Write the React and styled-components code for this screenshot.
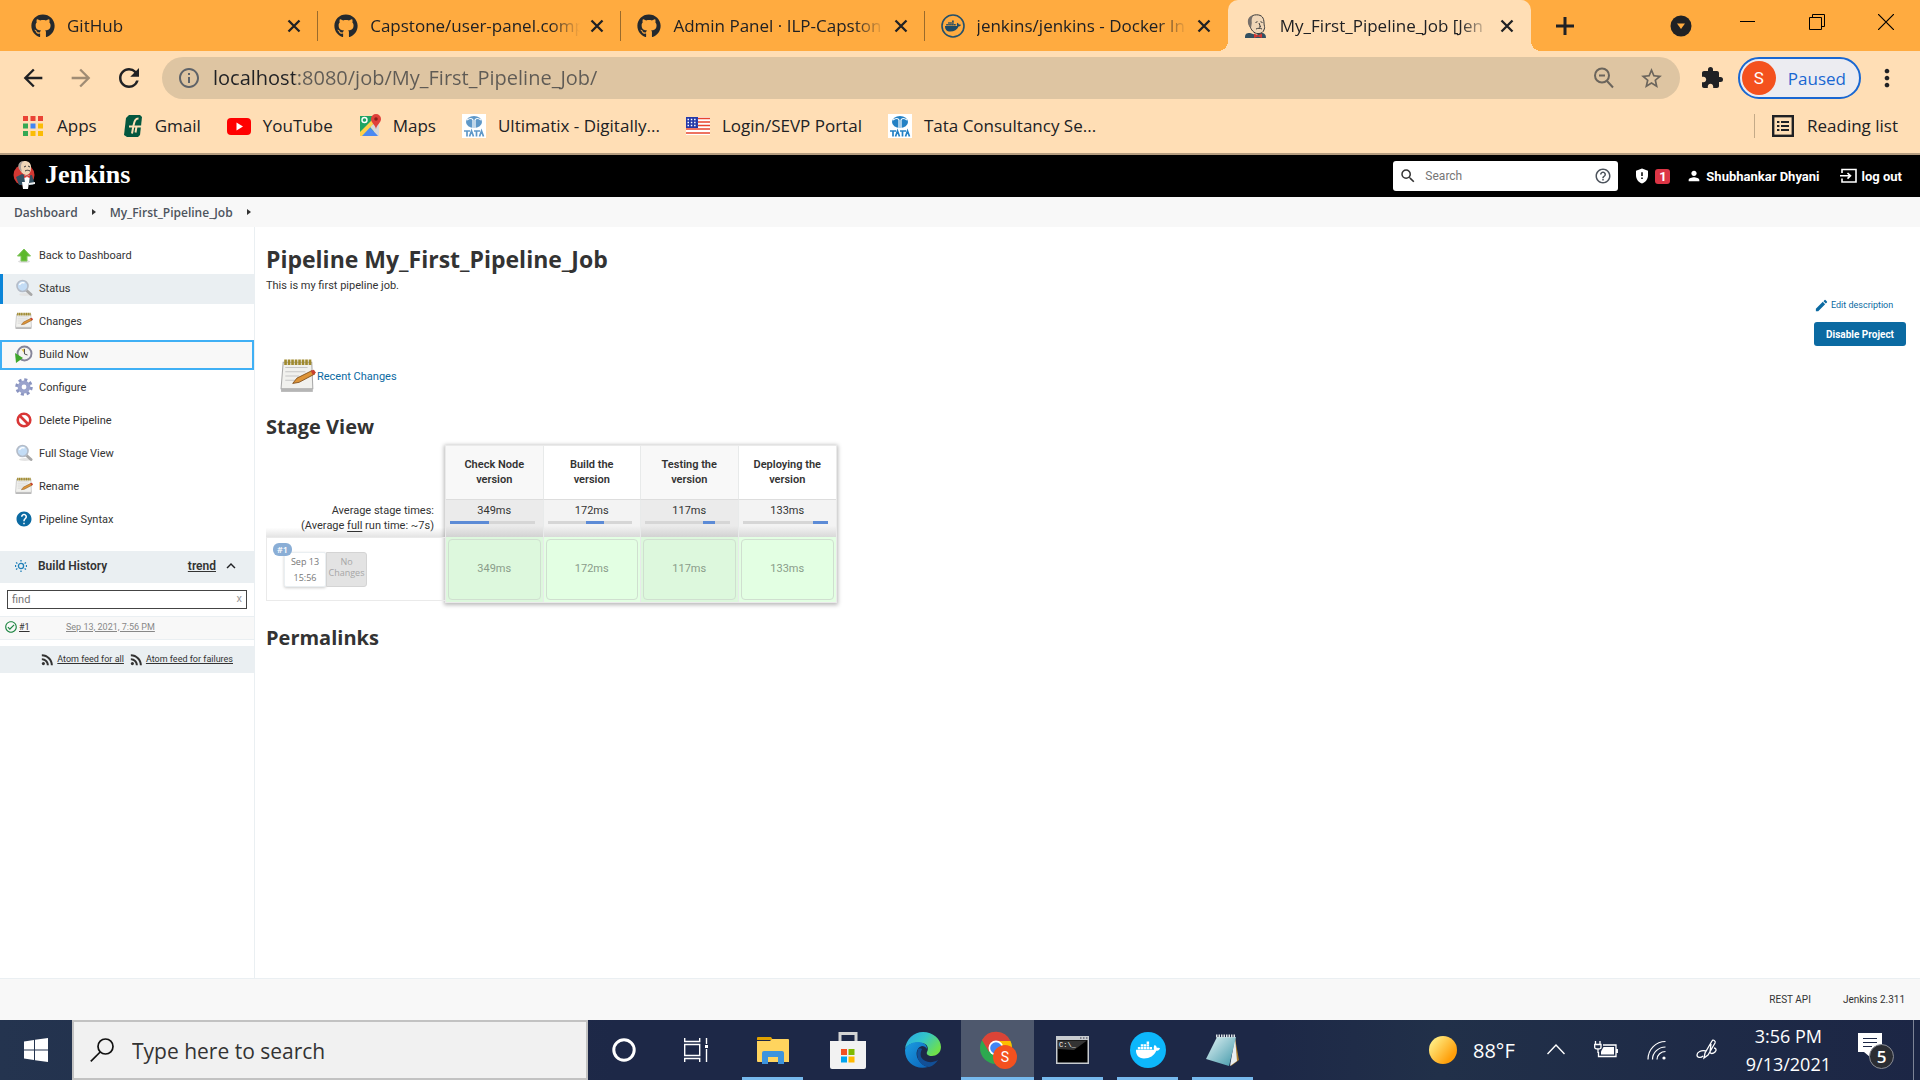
import React from "react";
import styled, { createGlobalStyle, css } from "styled-components";
import { FaGithub, FaDocker } from "react-icons/fa";
import {
  MdArrowBack,
  MdArrowForward,
  MdRefresh,
  MdInfoOutline,
  MdStarBorder,
  MdExtension,
  MdMoreVert,
  MdSearch,
  MdHelpOutline,
  MdGppMaybe,
  MdPerson,
  MdEdit,
  MdRssFeed,
  MdExpandLess,
  MdHelp,
  MdOutlineCheckCircle,
} from "react-icons/md";

const uiFont = `"Open Sans", "Noto Sans", sans-serif`;

const GlobalStyle = createGlobalStyle`
  * { box-sizing: border-box; }
  body {
    margin: 0;
    background: #fff;
    color: #333;
    font-family: Roboto, "Open Sans", sans-serif;
    font-size: 11px;
    line-height: 15px;
  }
  button, input { font: inherit; color: inherit; }
  button { margin: 0; padding: 0; border: 0; background: none; cursor: pointer; }
  a { color: inherit; text-decoration: none; }
  svg { display: block; flex: none; }
`;

const Screen = styled.div`
  display: flex;
  flex-direction: column;
  min-height: 100vh;
`;

/* ---------- Browser chrome ---------- */

const TabStrip = styled.div`
  display: flex;
  height: 51px;
  padding-left: 15px;
  background: #ffab40;
  color: #202124;
  font-family: ${uiFont};
  font-size: 17px;
  line-height: 24px;
`;

const Tabs = styled.div`
  display: flex;
  flex: 0 1 1516px;
  min-width: 0;
`;

const Tab = styled.div`
  position: relative;
  display: flex;
  flex: 1 1 0;
  min-width: 0;
  align-items: center;
  padding: 0 14px 0 16px;
  ${(p) =>
    p.$active
      ? css`
          background: #ffdeb5;
          border-radius: 10px 10px 0 0;
          &::before,
          &::after {
            content: "";
            position: absolute;
            bottom: 0;
            width: 10px;
            height: 10px;
          }
          &::before {
            right: 100%;
            background: radial-gradient(circle at 0 0, #ffab40 10px, #ffdeb5 10px);
          }
          &::after {
            left: 100%;
            background: radial-gradient(circle at 100% 0, #ffab40 10px, #ffdeb5 10px);
          }
        `
      : css`
          &:not(:nth-last-child(2))::after {
            content: "";
            position: absolute;
            right: 0;
            top: 11px;
            width: 1px;
            height: 30px;
            background: #9a6a2b;
          }
        `}
`;

const TabTitle = styled.button`
  flex: 1;
  min-width: 0;
  margin: 0 3px 0 12px;
  overflow: hidden;
  white-space: nowrap;
  text-align: left;
  mask-image: linear-gradient(to right, #000 calc(100% - 34px), transparent calc(100% - 4px));
`;

const IconButton = styled.button`
  display: flex;
  flex: none;
  align-items: center;
  justify-content: center;
  width: ${(p) => p.$w || 24}px;
  height: 24px;
  color: ${(p) => p.$color || "#202124"};
`;

const NewTab = styled(IconButton)`
  width: 36px;
  height: 51px;
  margin-left: 16px;
`;

const WindowControls = styled.div`
  display: flex;
  margin-left: auto;
`;

const WindowButton = styled.button`
  display: flex;
  align-items: center;
  justify-content: center;
  width: 69px;
  height: 43px;
  color: #000;
`;

const TabSearch = styled(WindowButton)`
  width: 64px;
  height: 51px;
`;

const Toolbar = styled.div`
  display: flex;
  align-items: center;
  height: 54px;
  padding: 0 21px;
  background: #ffdeb5;
  color: #202124;
  font-family: ${uiFont};
`;

const NavButtons = styled.div`
  display: flex;
  gap: 24px;
  margin-right: 21px;
`;

const Omnibox = styled.div`
  display: flex;
  flex: 1;
  align-items: center;
  gap: 12px;
  height: 42px;
  margin-right: 20px;
  padding: 0 16px 0 15px;
  border-radius: 21px;
  background: #dec5a2;
  color: #5f5b55;
`;

const UrlInput = styled.input`
  flex: 1;
  min-width: 0;
  padding: 0;
  border: 0;
  outline: 0;
  background: linear-gradient(to right, #202124 82px, #5f5b55 82px);
  background-clip: text;
  -webkit-text-fill-color: transparent;
  font-size: 20px;
  line-height: 28px;
`;

const OmniActions = styled.div`
  display: flex;
  gap: 24px;
`;

const Profile = styled.button`
  display: flex;
  align-items: center;
  gap: 12px;
  height: 42px;
  margin: 0 14px;
  padding: 0 13px 0 2px;
  border: 2px solid #1967d2;
  border-radius: 21px;
  background: #ececf1;
  color: #1967d2;
  font-size: 17px;
`;

const Avatar = styled.span`
  display: flex;
  align-items: center;
  justify-content: center;
  width: 34px;
  height: 34px;
  border-radius: 50%;
  background: #f4511e;
  color: #fff;
  font: 17px Roboto, sans-serif;
`;

const Bookmarks = styled.nav`
  display: flex;
  align-items: center;
  height: 50px;
  padding: 0 22px 6px 21px;
  border-bottom: 2px solid #b59d80;
  background: #ffdeb5;
  color: #202124;
  font-family: ${uiFont};
  font-size: 17px;
  line-height: 24px;
  white-space: nowrap;
`;

const Bookmark = styled.a`
  display: flex;
  align-items: center;
  gap: 12px;
  margin-right: 26px;
`;

const ReadingList = styled.button`
  display: flex;
  align-items: center;
  gap: 12px;
  margin-left: auto;
  padding-left: 16px;
  border-left: 1px solid #c4aa88;
`;

/* ---------- Jenkins header ---------- */

const Header = styled.header`
  display: flex;
  align-items: center;
  height: 42px;
  padding: 0 18px 0 13px;
  background: #000;
  color: #fff;
  font-size: 13px;
  font-weight: 700;
`;

const Brand = styled.a`
  display: flex;
  align-items: center;
  gap: 8px;
  margin-right: auto;
  padding-bottom: 2px;
  font: 700 26px/28px "Liberation Serif", serif;
`;

const SearchBox = styled.label`
  display: flex;
  align-items: center;
  gap: 8px;
  width: 225px;
  height: 30px;
  padding: 0 6px;
  border-radius: 3px;
  background: #fff;
  color: #333;
`;

const SearchInput = styled.input`
  flex: 1;
  min-width: 0;
  padding: 0;
  border: 0;
  outline: 0;
  background: none;
  font-size: 12px;
  font-weight: 400;
  &::placeholder { color: #757575; opacity: 1; }
`;

const HeaderLink = styled.a`
  display: flex;
  align-items: center;
  gap: 4px;
  margin-left: ${(p) => p.$gap}px;
`;

const Badge = styled.span`
  width: 15px;
  border-radius: 3px;
  background: #dc3545;
  text-align: center;
`;

const Crumbs = styled.nav`
  display: flex;
  align-items: center;
  gap: 14px;
  height: 30px;
  padding: 0 14px;
  background: #f8f8f8;
  color: #4d545d;
  font-family: ${uiFont};
  font-size: 12px;
  font-weight: 600;
`;

const Caret = styled.span`
  border: 3px solid transparent;
  border-left: 4px solid #333;
  border-right: 0;
`;

/* ---------- Jenkins body ---------- */

const PageBody = styled.div`
  display: flex;
  flex: 1;
`;

const SidePanel = styled.aside`
  flex: none;
  width: 255px;
  padding-top: 14px;
  border-right: 1px solid #eaeff2;
`;

const Tasks = styled.nav`
  display: flex;
  flex-direction: column;
  gap: 3px;
  margin-bottom: 16px;
`;

const Task = styled.a`
  display: flex;
  align-items: center;
  gap: 6px;
  height: 30px;
  padding: 0 0 2px 15px;
  ${(p) =>
    p.$state === "current" &&
    css`
      padding-left: 12px;
      border-left: 3px solid #0b85d8;
      background: #eaeff2;
    `}
  ${(p) =>
    p.$state === "focused" &&
    css`
      padding-left: 13px;
      border: 2px solid #40b0f5;
      background: #f8f8f8;
    `}
`;

const HistoryHead = styled.div`
  display: flex;
  align-items: center;
  height: 32px;
  padding: 0 8px 2px 15px;
  background: #eaeff2;
  font-size: 12px;
  font-weight: 600;
`;

const HistoryTitle = styled.span`
  margin: 0 auto 0 11px;
`;

const Underlined = styled.a`
  text-decoration: underline;
  color: ${(p) => p.$color || "inherit"};
`;

const FindBox = styled.label`
  display: flex;
  height: 19px;
  margin: 7px;
  padding: 0 4px;
  border: 1px solid #444;
  color: #999;
  line-height: 15px;
`;

const FindInput = styled.input`
  flex: 1;
  min-width: 0;
  padding: 0;
  border: 0;
  outline: 0;
  background: none;
  &::placeholder { color: #757575; opacity: 1; }
`;

const Build = styled.div`
  display: flex;
  align-items: center;
  height: 24px;
  margin-bottom: 6px;
  padding: 0 0 2px 4px;
  border: solid #eaeff2;
  border-width: 1px 0;
  background: #f8f8f8;
  font-size: 9px;
`;

const BuildNumber = styled(Underlined)`
  width: 47px;
  margin-left: 1px;
`;

const Feeds = styled.div`
  display: flex;
  align-items: center;
  justify-content: flex-end;
  gap: 4px;
  height: 27px;
  padding-right: 21px;
  background: #eaeff2;
  font-size: 9px;
  white-space: nowrap;
`;

const Feed = styled.a`
  display: flex;
  align-items: center;
  gap: 1px;
  text-decoration: underline;
`;

const Main = styled.main`
  display: flex;
  flex: 1;
  justify-content: space-between;
  padding: 17px 14px 24px 11px;
`;

const Title = styled.h1`
  margin: 0;
  font-family: ${uiFont};
  font-size: 23px;
  line-height: 30px;
`;

const Heading = styled.h2`
  margin: 0;
  font-family: ${uiFont};
  font-size: 20px;
  line-height: 26px;
`;

const Description = styled.p`
  margin: 4px 0 65px;
`;

const RecentChanges = styled.a`
  display: flex;
  align-items: center;
  gap: 1px;
  margin: 0 0 20px 14px;
  color: #0b6aa2;
`;

const SideActions = styled.div`
  display: flex;
  flex-direction: column;
  align-items: flex-start;
  gap: 9px;
  padding-top: 54px;
`;

const EditLink = styled.a`
  display: flex;
  align-items: center;
  gap: 2px;
  color: #0b6aa2;
  font-size: 9px;
`;

const PrimaryButton = styled.button`
  height: 24px;
  padding: 0 12px;
  border-radius: 3px;
  background: #0b6aa2;
  color: #fff;
  font-size: 10px;
  font-weight: 700;
`;

const StageView = styled.div`
  display: flex;
  margin: 5px 0 22px;
`;

const RunColumn = styled.div`
  display: flex;
  flex-direction: column;
  width: 179px;
  padding-top: 54px;
`;

const Averages = styled.div`
  height: 38px;
  padding: 4px 11px 0 0;
  background: linear-gradient(to bottom, #fff 75%, #e4e4e4);
  text-align: right;
  u { text-underline-offset: 2px; }
`;

const Run = styled.div`
  position: relative;
  display: flex;
  align-items: flex-start;
  height: 64px;
  padding: 14px 0 0 17px;
  border: 1px solid #eaeaea;
  border-right: 0;
  color: #777;
  font-family: ${uiFont};
  font-size: 9px;
`;

const RunBadge = styled.span`
  position: absolute;
  left: 6px;
  top: 5px;
  width: 19px;
  height: 13px;
  border-radius: 6px;
  background: #8aaed6;
  color: #fff;
  font-weight: 600;
  line-height: 13px;
  text-align: center;
`;

const RunDate = styled.div`
  display: flex;
  flex-direction: column;
  align-items: center;
  gap: 1px;
  width: 42px;
  height: 35px;
  padding-top: 1px;
  border: 1px solid #eaeff2;
  border-radius: 2px;
  background: #fff;
  box-shadow: 0 1px 3px rgba(0, 0, 0, 0.2);
`;

const RunChanges = styled.div`
  width: 41px;
  height: 35px;
  padding-top: 3px;
  border: 1px solid #d4d4d4;
  border-radius: 0 3px 3px 0;
  background: #e3e3e3;
  color: #a6a6a6;
  line-height: 11px;
  text-align: center;
`;

const StageTable = styled.table`
  width: 392px;
  table-layout: fixed;
  border-collapse: separate;
  border-spacing: 0;
  border: 1px solid #eaeaea;
  box-shadow: 0 1px 4px 1px rgba(0, 0, 0, 0.28);
  th, td {
    border-right: 1px solid #e8eaea;
    text-align: center;
  }
  th:last-child, td:last-child { border-right: 0; }
`;

const StageName = styled.th`
  height: 53px;
  padding: 0 10px 2px;
  background: ${(p) => (p.$odd ? "#f8f8f8" : "#fff")};
  font-weight: 600;
`;

const StageLabel = styled.span`
  display: block;
  width: 76px;
  margin: 0 auto;
`;

const AverageCell = styled.td`
  height: 38px;
  padding: 3px 0 0;
  border-top: 1px solid #ddd;
  vertical-align: top;
  background: ${(p) =>
    p.$odd
      ? "linear-gradient(to bottom, #ebebeb 70%, #d2d2d2)"
      : "linear-gradient(to bottom, #f3f3f3 70%, #d9d9d9)"};
`;

const Track = styled.div`
  height: 3px;
  margin: 3px 8px 0 4px;
  background: #d6d6d6;
`;

const TrackFill = styled.div`
  height: 3px;
  background: #5c8bd6;
`;

const RunCell = styled.td`
  height: 65px;
  padding: 2px;
  background: ${(p) => (p.$odd ? "#ddf8dd" : "#e3ffe3")};
`;

const RunStage = styled.div`
  display: flex;
  align-items: center;
  justify-content: center;
  height: 61px;
  padding-bottom: 2px;
  border: 1px solid #d0dfd0;
  border-radius: 4px;
  color: #8a9c8a;
`;

const Footer = styled.footer`
  display: flex;
  align-items: center;
  justify-content: flex-end;
  gap: 32px;
  height: 42px;
  padding-right: 15px;
  border-top: 1px solid #eaeff2;
  background: #f8f8f8;
  font-size: 10px;
`;

/* ---------- Windows taskbar ---------- */

const Taskbar = styled.div`
  display: flex;
  height: 60px;
  background: linear-gradient(to right, #24344f, #1d2847 32%, #1d2847 66%, #213049 75%, #1c2645);
  color: #fff;
  font-family: ${uiFont};
`;

const StartButton = styled.button`
  display: flex;
  align-items: center;
  justify-content: center;
  width: 72px;
`;

const TaskSearch = styled.label`
  display: flex;
  flex: 0 1 516px;
  align-items: center;
  gap: 18px;
  padding: 0 16px;
  border: 2px solid #c2c2c2;
  background: #f1f1f1;
`;

const TaskSearchInput = styled.input`
  flex: 1;
  min-width: 0;
  padding: 2px 0 0;
  border: 0;
  outline: 0;
  background: none;
  font-size: 21px;
  line-height: 30px;
  &::placeholder { color: #333; opacity: 1; }
`;

const Apps = styled.div`
  display: flex;
  gap: ${(p) => p.$gap}px;
  margin-right: 4px;
`;

const AppButton = styled.button`
  display: flex;
  align-items: center;
  justify-content: center;
  width: ${(p) => p.$w}px;
  background-color: ${(p) => (p.$active ? "#4e586d" : "transparent")};
  background-image: ${(p) => (p.$open ? "linear-gradient(#76b9ed, #76b9ed)" : "none")};
  background-repeat: no-repeat;
  background-position: center bottom;
  background-size: ${(p) => (p.$active ? "100%" : "61px")} 3px;
`;

const Tray = styled.div`
  display: flex;
  align-items: center;
  margin-left: auto;
`;

const Weather = styled.button`
  display: flex;
  align-items: center;
  gap: 16px;
  margin-right: 32px;
  font-size: 20px;
`;

const TrayIcons = styled.div`
  display: flex;
  align-items: center;
  gap: 29px;
  margin-right: 28px;
`;

const Clock = styled.time`
  font-size: 18px;
  line-height: 28px;
  text-align: center;
`;

const Notifications = styled.button`
  display: flex;
  margin: 0 19px 0 26px;
`;

const ShowDesktop = styled.button`
  align-self: stretch;
  width: 7px;
  border-left: 1px solid #7d8496;
`;

/* ---------- Drawings ---------- */

const CloseIcon = () => (
  <svg width="14" height="14" viewBox="0 0 14 14">
    <path d="M1.500 1.500l11 11M12.500 1.500l-11 11" stroke="#202124" strokeWidth="2.300" />
  </svg>
);

const PlusIcon = () => (
  <svg width="18" height="18" viewBox="0 0 18 18">
    <path d="M9 0v18M0 9h18" stroke="#202124" strokeWidth="3" />
  </svg>
);

const AppsGrid = () => {
  const colors = ["#ea4335", "#ea4335", "#ea4335", "#34a853", "#4285f4", "#fbbc04", "#34a853", "#fbbc04", "#fbbc04"];
  return (
    <svg width="24" height="24">
      {colors.map((c, i) => (
        <rect key={i} x={2 + (i % 3) * 7.5} y={2 + Math.floor(i / 3) * 7.5} width="5" height="5" fill={c} />
      ))}
    </svg>
  );
};

const GreenGLogo = () => (
  <svg width="20" height="24" viewBox="0 0 20 24">
    <path d="M6 1h11l2 2-2 18-2 2H4l-3-2L3 4z" fill="#03573f" />
    <path d="M15.500 4.500c-3.500 0-4 3-5 7l-1.500 8" stroke="#ffdeb5" strokeWidth="2" fill="none" />
    <path d="M6 12.500h12M13.500 12.500l-1 6" stroke="#ffdeb5" strokeWidth="2" fill="none" />
  </svg>
);

const YouTubeLogo = () => (
  <svg width="24" height="24" viewBox="0 0 24 24">
    <rect y="4" width="24" height="17" rx="4" fill="#f00" />
    <path d="M9.500 8.500v8l6.500-4z" fill="#fff" />
  </svg>
);

const MapsLogo = () => (
  <svg width="22" height="24" viewBox="0 0 22 24">
    <path d="M1 2h14v20H1z" fill="#1fa463" />
    <path d="M1 22l9-9 10 9z" fill="#4a89f3" />
    <path d="M12 11l8-3v14h-1l-8-9z" fill="#d8d8d8" />
    <path d="M1 18L16 3l2 3L3 22H1z" fill="#ffd04b" />
    <circle cx="5.500" cy="6" r="2.500" fill="none" stroke="#fff" strokeWidth="1.400" />
    <path d="M17 0a5 5 0 0 1 5 5c0 4-4 5-5 10-1-5-5-6-5-10a5 5 0 0 1 5-5z" fill="#e0403a" />
    <circle cx="17" cy="5" r="1.800" fill="#8c1f1b" />
  </svg>
);

const TataLogo = ({ color }) => (
  <svg width="24" height="24" viewBox="0 0 24 24">
    <rect width="24" height="24" fill="#fff" />
    <ellipse cx="12" cy="8" rx="8" ry="6" fill={color} />
    <path d="M5 6c3-2 5-2 6 0v8M19 6c-3-2-5-2-6 0v8" stroke="#fff" strokeWidth="1.200" fill="none" />
    <path d="M2 17h6M5 17v5.500M7.500 22.500l2-5.500 2 5.500M12 17h6M14.500 17v5.500M17.500 22.500l2-5.500 2 5.500" stroke={color} strokeWidth="1.700" fill="none" />
  </svg>
);

const FlagIcon = () => (
  <svg width="24" height="24" viewBox="0 0 24 24">
    <rect y="3" width="24" height="18" fill="#fff" />
    <path d="M0 4.500h24M0 8h24M0 11.500h24M0 15h24M0 19h24" stroke="#e8442e" strokeWidth="1.600" />
    <rect y="3" width="12" height="11" fill="#2438a8" />
    <path d="M1.500 5.500h10M1.500 8.500h10M1.500 11.500h10" stroke="#fff" strokeDasharray="1.500 1.800" strokeWidth="1.300" />
  </svg>
);

const ReadingListIcon = () => (
  <svg width="24" height="24" viewBox="0 0 24 24">
    <rect x="2.200" y="2.200" width="19.600" height="19.600" fill="none" stroke="#202124" strokeWidth="2.400" />
    <path d="M6 8h2.400M6 12h2.400M6 16h2.400M10 8h8M10 12h8M10 16h8" stroke="#202124" strokeWidth="2" />
  </svg>
);

const ButlerHead = () => (
  <svg width="24" height="24" viewBox="0 0 24 24">
    <path d="M1 24c0-4 1-5 5-5l6 2 5-2c4 0 5 2 5 5z" fill="#335061" />
    <path d="M5.500 11C3.500 5 7 .8 12.500.8S20 4 20 9c0 3 1.200 4 .3 6-.8 3.500-3.300 4.600-6.300 4.600-4 0-7-3.600-8.500-8.600z" fill="#f0d6b7" stroke="#3a3a3a" strokeWidth="1" />
    <path d="M5 12C2.500 7 4 2 9.500 1.200 7.500 4 7.500 6 7.800 9l-.8 5z" fill="#77706b" />
    <path d="M11.500 8.500l2-.8M16.500 7.700l2 .8M15 9l1.500 4H15M12 15c2-1 4-1 6 0" stroke="#3a3a3a" strokeWidth="1" fill="none" />
    <path d="M10 19.500l4 2 4-2v4.500l-4-1.500-4 1.500z" fill="#d33833" />
  </svg>
);

const ButlerLogo = () => (
  <svg width="24" height="30" viewBox="0 0 24 30">
    <circle cx="11" cy="15" r="10.500" fill="#d33833" />
    <path d="M3 17l6-3 5 2 5-1 2 7-1 3H6z" fill="#335061" />
    <path d="M11 15l3 1 3-1-1 8h-4z" fill="#fff" />
    <path d="M6 7c0-4 3-6 6-6s6 2 6 6c0 4-1 8-5 8-4-1-6-4-7-8z" fill="#f0d6b7" />
    <path d="M6 9C4 4 7 1 11 1 8 3 8 5 8 8l1 4z" fill="#a9a19a" />
    <path d="M11 7l2-1M15 6l2 1M12 11c2-1 3-1 5 0" stroke="#333" strokeWidth="1" fill="none" />
    <path d="M11 15l3 1.500 3-1.500v3l-3-1-3 1z" fill="#d33833" />
    <path d="M9 22h7l-1 7h-5z" fill="#fff" />
    <path d="M16 23l6-1v2l-6 1z" fill="#eee" />
  </svg>
);

const DockerWheel = () => (
  <svg width="24" height="24" viewBox="0 0 24 24">
    <circle cx="12" cy="12" r="11" fill="none" stroke="#24506a" strokeWidth="1.600" />
    <g transform="translate(4 4)">
      <FaDocker size={16} color="#1e4a66" />
    </g>
  </svg>
);

const ZoomOutIcon = () => (
  <svg width="24" height="24" viewBox="0 0 24 24" fill="none" stroke="#6b655c" strokeWidth="2">
    <circle cx="10" cy="9.500" r="7" />
    <path d="M15 15l6 6.500M7 9.500h6" />
  </svg>
);

const LogoutIcon = () => (
  <svg width="18" height="18" viewBox="0 0 18 18" fill="none" stroke="#fff" strokeWidth="1.600">
    <path d="M2 6V2.500h14v12.500H2V11.500M0 8.800h10M7.500 6l3 2.800-3 2.800" />
  </svg>
);

const UpArrowIcon = () => (
  <svg width="18" height="18" viewBox="0 0 18 18">
    <ellipse cx="9" cy="15.500" rx="6" ry="1.300" fill="#ddd" />
    <path d="M9 3l6.500 7H12v5H6v-5H2.500z" fill="#5cb82c" stroke="#7fc45a" />
  </svg>
);

const MagnifierIcon = () => (
  <svg width="18" height="18" viewBox="0 0 18 18">
    <ellipse cx="10" cy="15.500" rx="6" ry="1.500" fill="#e4e4e4" />
    <path d="M11 11l5 4.500" stroke="#a8a8a8" strokeWidth="3" strokeLinecap="round" />
    <circle cx="7.500" cy="7" r="5.500" fill="#c3dcf5" stroke="#b4bcc8" strokeWidth="1.600" />
    <path d="M4.500 6a3.500 3 0 0 1 5-2" stroke="#fff" strokeWidth="1.400" fill="none" />
  </svg>
);

const NotepadIcon = ({ size = 18 }) => (
  <svg width={size} height={size} viewBox="0 0 34 34">
    <path d="M3 4h27l1 25H1z" fill="#f1f1ee" stroke="#aaa" strokeWidth="1" />
    <path d="M1 29h30v3H1z" fill="#b5b5b5" />
    <path d="M5 9h21M5 13h19M5 17h13M5 21h9" stroke="#c6c6c6" strokeWidth="1" />
    <path d="M4 4h26" stroke="#a08a2e" strokeWidth="5" strokeDasharray="2.500 0.800" />
    <path d="M12 24l4-5 14-7 3 3-15 8z" fill="#dd9438" stroke="#7a4a17" strokeWidth="0.800" />
    <path d="M29 12l3-1 2 3-3 2z" fill="#c8402f" />
  </svg>
);

const BuildClockIcon = () => (
  <svg width="18" height="18" viewBox="0 0 18 18">
    <circle cx="9.500" cy="8.500" r="7" fill="#f4f4f2" stroke="#85859a" strokeWidth="1.900" />
    <path d="M9.500 8.500l-3-4 3-1z" fill="#e0c050" />
    <path d="M9.500 4v5l3 1" stroke="#555" strokeWidth="1" fill="none" />
    <path d="M0 8l8 5-7 5z" fill="#3fa82c" />
  </svg>
);

const GearIcon = () => (
  <svg width="18" height="18" viewBox="0 0 18 18">
    <circle cx="9" cy="9" r="7" fill="none" stroke="#8a94c0" strokeWidth="3.500" strokeDasharray="2.900 2.600" />
    <circle cx="9" cy="9" r="4.400" fill="none" stroke="#9aa3cc" strokeWidth="4" />
  </svg>
);

const ForbiddenIcon = () => (
  <svg width="18" height="18" viewBox="0 0 18 18">
    <circle cx="9" cy="9" r="6.300" fill="#fff" stroke="#d93636" strokeWidth="2.600" />
    <path d="M4.500 4.500l9 9" stroke="#d93636" strokeWidth="2.600" />
  </svg>
);

const SunIcon = () => (
  <svg width="12" height="12" viewBox="0 0 12 12" fill="none" stroke="#1f7fb8" strokeWidth="1.300">
    <circle cx="6" cy="6" r="2.600" />
    <path d="M6 0v1.400M6 10.600V12M1 2.500l1.400 1M9.600 8.500l1.400 1M1 9.500l1.400-1M9.600 3.500l1.400-1M.5 5v2M11.500 5v2" />
  </svg>
);

const WindowsLogo = () => (
  <svg width="24" height="24" viewBox="0 0 24 24" fill="#fff">
    <path d="M0 3.400l10-1.400v9.500H0zM11 1.800L24 0v11.500H11zM0 12.500h10V22L0 20.600zM11 12.500h13V24l-13-1.800z" />
  </svg>
);

const TaskSearchIcon = () => (
  <svg width="24" height="24" viewBox="0 0 24 24" fill="none" stroke="#111" strokeWidth="1.700">
    <circle cx="15.500" cy="8.500" r="7.500" />
    <path d="M10.200 14L0.800 23.400" />
  </svg>
);

const CortanaIcon = () => (
  <svg width="24" height="24" viewBox="0 0 24 24">
    <circle cx="12" cy="12" r="10.200" fill="none" stroke="#fff" strokeWidth="3" />
  </svg>
);

const TaskViewIcon = () => (
  <svg width="24" height="24" viewBox="0 0 24 24" fill="none" stroke="#fff" strokeWidth="1.400">
    <path d="M.7 0v3.500h15V0M.7 24v-3.500h15V24M.7 6.500h15v11h-15zM22.500 0v6M22.500 11v13" />
    <path d="M21 7h3v3h-3z" fill="#fff" stroke="none" />
  </svg>
);

const FolderIcon = () => (
  <svg width="32" height="28" viewBox="0 0 32 28">
    <path d="M0 2a1 1 0 0 1 1-1h13l2 3H0z" fill="#e0a100" />
    <path d="M0 5h13l2-2h16a1 1 0 0 1 1 1v22H1a1 1 0 0 1-1-1z" fill="#ffd45e" />
    <path d="M5 28V17a2 2 0 0 1 2-2h18a2 2 0 0 1 2 2v11h-6v-7H11v7z" fill="#3d94dd" />
  </svg>
);

const StoreIcon = () => (
  <svg width="36" height="38" viewBox="0 0 36 38">
    <path d="M10 12V2.500h16V12" fill="none" stroke="#d4d4d4" strokeWidth="3" />
    <path d="M0 10h36v26a2 2 0 0 1-2 2H2a2 2 0 0 1-2-2z" fill="#f2f2f2" />
    <path d="M11 18h6v6h-6z" fill="#f25022" />
    <path d="M18.500 18h6v6h-6z" fill="#7fba00" />
    <path d="M11 25.500h6v6h-6z" fill="#00a4ef" />
    <path d="M18.500 25.500h6v6h-6z" fill="#ffb900" />
  </svg>
);

const EdgeIcon = () => (
  <svg width="36" height="36" viewBox="0 0 36 36">
    <defs>
      <linearGradient id="edgeTop" x1="0" x2="1" y1="0" y2="0.600">
        <stop offset="0" stopColor="#2aa5e8" />
        <stop offset="0.500" stopColor="#33c6c9" />
        <stop offset="1" stopColor="#6fe04a" />
      </linearGradient>
      <linearGradient id="edgeLow" x1="0" x2="1" y1="0" y2="1">
        <stop offset="0" stopColor="#1b9de2" />
        <stop offset="1" stopColor="#0b63b8" />
      </linearGradient>
    </defs>
    <path d="M0 17C1 7 9 0 18 0c10 0 18 7 18 15 0 6-5 9-9 9-4 0-6-2-5-4 2-3 1-9-6-9C8 10 2 13 0 17z" fill="url(#edgeTop)" />
    <path d="M0 18c1-5 7-8 13-8 6 0 9 3 9 7-1-2-3-3-5-3-5 1-7 8-4 13 2 4 6 7 10 8C11 38 0 31 0 18z" fill="url(#edgeLow)" />
    <path d="M13 17c-3 8 2 17 11 18 4-1 7-4 9-7-7 4-14 2-17-3-1-3 0-6 1-8-1-1-3-1-4 0z" fill="#124f96" />
  </svg>
);

const ChromeIcon = () => (
  <svg width="38" height="38" viewBox="0 0 38 38">
    <circle cx="17" cy="17" r="16" fill="#2da94f" />
    <path d="M3 9A16 16 0 0 1 31.500 10H17l-7 11z" fill="#db4437" />
    <path d="M17 10h14.500A16 16 0 0 1 17 33l7-12z" fill="#fdbd00" />
    <circle cx="17" cy="17" r="7.500" fill="#fff" />
    <circle cx="17" cy="17" r="5.800" fill="#4285f4" />
    <circle cx="26" cy="26" r="12" fill="#f4511e" />
    <text x="26" y="31" fill="#fff" fontFamily="Roboto, sans-serif" fontSize="14" textAnchor="middle">S</text>
  </svg>
);

const TerminalIcon = () => (
  <svg width="33" height="28" viewBox="0 0 33 28">
    <rect width="33" height="28" fill="#c8ccd0" />
    <rect x="1.500" y="4" width="30" height="22.500" fill="#000" />
    <path d="M2 4.500h29L18 14 2 13z" fill="#333" />
    <path d="M24 2h1.500M27 2h1.500M30 2h1.500" stroke="#334" strokeWidth="1.200" />
    <text x="3" y="11" fill="#fff" fontFamily="'Liberation Mono', monospace" fontSize="7">C:\_</text>
  </svg>
);

const DockerIcon = () => (
  <svg width="36" height="36" viewBox="0 0 36 36">
    <circle cx="18" cy="18" r="18" fill="#0db7fb" />
    <g transform="translate(6 6)">
      <FaDocker size={24} color="#fff" />
    </g>
  </svg>
);

const NotebookIcon = () => (
  <svg width="34" height="34" viewBox="0 0 34 34">
    <defs>
      <linearGradient id="notebook" x1="0" x2="1" y1="0" y2="1">
        <stop offset="0" stopColor="#e4f4f6" />
        <stop offset="1" stopColor="#3f97a8" />
      </linearGradient>
    </defs>
    <path d="M29 5l4 22-8 6z" fill="#a97c2c" />
    <path d="M29 4l2 24-7 5z" fill="#e9eef0" />
    <path d="M11 4h19l-7 29L0 26z" fill="url(#notebook)" />
    <path d="M10 3h20" stroke="#dfe3e6" strokeWidth="3" strokeDasharray="1.500 1" />
  </svg>
);

const WeatherSun = () => (
  <svg width="28" height="28" viewBox="0 0 28 28">
    <defs>
      <linearGradient id="sun" x1="0" x2="1" y1="0.100" y2="0.900">
        <stop offset="0.150" stopColor="#ffe77a" />
        <stop offset="0.800" stopColor="#ff9f0a" />
      </linearGradient>
    </defs>
    <circle cx="14" cy="14" r="14" fill="url(#sun)" />
  </svg>
);

const TrayChevron = () => (
  <svg width="18" height="18" viewBox="0 0 18 18">
    <path d="M.5 13L9 4l8.500 9" fill="none" stroke="#fff" strokeWidth="1.400" />
  </svg>
);

const BatteryIcon = () => (
  <svg width="24" height="20" viewBox="0 0 24 20" fill="none" stroke="#fff" strokeWidth="1.300">
    <path d="M9 5h13v11.500H4.500V12M1.500 1v3M6 1v3M.7 4.500h6.300v3c0 2-6.300 2-6.300 0zM4 9v4M23.300 9v4" />
    <path d="M9.500 7H20v7.500H7v-3z" fill="#fff" stroke="none" />
  </svg>
);

const WifiIcon = () => (
  <svg width="20" height="20" viewBox="0 0 20 20" fill="none" stroke="#fff" strokeWidth="1.200">
    <path d="M1 19.500C1 9 9 1.500 18.500 1.500M5.500 19.500c0-7 6-12.500 13-12.500M10 19.500c0-4.500 4-8 8.500-8" />
    <circle cx="17" cy="18" r="1.600" fill="#fff" stroke="none" />
  </svg>
);

const PenIcon = () => (
  <svg width="22" height="22" viewBox="0 0 22 22" fill="none" stroke="#fff" strokeWidth="1.300">
    <path d="M8 19l1-5 7-12c1-2 4 0 3 2l-7 12zM10 12c-5-1-9 1-9 4 0 3 4 3 6 1M15 5l-1 8c0 2 3 2 5 0 2-2 1-4-1-4" />
  </svg>
);

const NotificationIcon = () => (
  <svg width="37" height="37" viewBox="0 0 37 37">
    <path d="M1 1h24v19H14l-1 5-6-5H1z" fill="#fff" />
    <path d="M6 6.500h14M6 10.500h14M6 14.500h9" stroke="#1d2847" strokeWidth="1.200" />
    <circle cx="24.500" cy="24.500" r="12" fill="#2b2d33" stroke="#8a8d96" strokeWidth="1" />
    <text x="24.500" y="31" fill="#fff" fontFamily="'Open Sans', sans-serif" fontSize="17" fontWeight="600" textAnchor="middle">5</text>
  </svg>
);

/* ---------- Data ---------- */

const tabs = [
  { title: "GitHub", icon: <FaGithub size={24} color="#24292e" /> },
  { title: "Capstone/user-panel.comp", icon: <FaGithub size={24} color="#24292e" /> },
  { title: "Admin Panel · ILP-Capston", icon: <FaGithub size={24} color="#24292e" /> },
  { title: "jenkins/jenkins - Docker In", icon: <DockerWheel /> },
  { title: "My_First_Pipeline_Job [Jen", icon: <ButlerHead />, active: true },
];

const bookmarks = [
  { label: "Apps", icon: <AppsGrid /> },
  { label: "Gmail", icon: <GreenGLogo /> },
  { label: "YouTube", icon: <YouTubeLogo /> },
  { label: "Maps", icon: <MapsLogo /> },
  { label: "Ultimatix - Digitally...", icon: <TataLogo color="#5f98c8" /> },
  { label: "Login/SEVP Portal", icon: <FlagIcon /> },
  { label: "Tata Consultancy Se...", icon: <TataLogo color="#2481c4" /> },
];

const tasks = [
  { label: "Back to Dashboard", icon: <UpArrowIcon /> },
  { label: "Status", icon: <MagnifierIcon />, state: "current" },
  { label: "Changes", icon: <NotepadIcon /> },
  { label: "Build Now", icon: <BuildClockIcon />, state: "focused" },
  { label: "Configure", icon: <GearIcon /> },
  { label: "Delete Pipeline", icon: <ForbiddenIcon /> },
  { label: "Full Stage View", icon: <MagnifierIcon /> },
  { label: "Rename", icon: <NotepadIcon /> },
  { label: "Pipeline Syntax", icon: <MdHelp size={18} color="#0b6aa2" /> },
];

const stages = [
  { name: "Check Node version", time: "349ms", start: 0, share: 46 },
  { name: "Build the version", time: "172ms", start: 45, share: 22 },
  { name: "Testing the version", time: "117ms", start: 69, share: 14 },
  { name: "Deploying the version", time: "133ms", start: 83, share: 17 },
];

const systemApps = [
  { label: "Cortana", icon: <CortanaIcon /> },
  { label: "Task View", icon: <TaskViewIcon /> },
];

const apps = [
  { label: "File Explorer", icon: <FolderIcon />, open: true },
  { label: "Microsoft Store", icon: <StoreIcon /> },
  { label: "Edge", icon: <EdgeIcon /> },
  { label: "Chrome", icon: <ChromeIcon />, open: true, active: true },
  { label: "Command Prompt", icon: <TerminalIcon />, open: true },
  { label: "Docker Desktop", icon: <DockerIcon />, open: true },
  { label: "Notepad", icon: <NotebookIcon />, open: true },
];

/* ---------- Sections ---------- */

const Browser = () => (
  <>
    <TabStrip>
      <Tabs>
        {tabs.map((t) => (
          <Tab key={t.title} $active={t.active}>
            {t.icon}
            <TabTitle>{t.title}</TabTitle>
            <IconButton $w={20} aria-label="Close tab">
              <CloseIcon />
            </IconButton>
          </Tab>
        ))}
      </Tabs>
      <NewTab aria-label="New tab">
        <PlusIcon />
      </NewTab>
      <WindowControls>
        <TabSearch aria-label="Search tabs">
          <svg width="22" height="22" viewBox="0 0 22 22">
            <circle cx="11" cy="11" r="10.500" fill="#202124" />
            <path d="M7 8.500h8L11 14z" fill="#ffab40" />
          </svg>
        </TabSearch>
        <WindowButton aria-label="Minimize">
          <svg width="15" height="15"><path d="M0 7.500h15" stroke="#000" /></svg>
        </WindowButton>
        <WindowButton aria-label="Restore">
          <svg width="16" height="16" fill="none" stroke="#000">
            <path d="M.5 3.500h12v12H.5zM3.500 3.500v-3h12v12h-3" />
          </svg>
        </WindowButton>
        <WindowButton aria-label="Close">
          <svg width="16" height="16"><path d="M0 0l16 16M16 0L0 16" stroke="#000" strokeWidth="1.200" /></svg>
        </WindowButton>
      </WindowControls>
    </TabStrip>
    <Toolbar>
      <NavButtons>
        <IconButton aria-label="Back"><MdArrowBack size={28} /></IconButton>
        <IconButton aria-label="Forward" $color="#a08c74"><MdArrowForward size={28} /></IconButton>
        <IconButton aria-label="Reload"><MdRefresh size={30} /></IconButton>
      </NavButtons>
      <Omnibox>
        <MdInfoOutline size={24} color="#5f6368" />
        <UrlInput aria-label="Address" defaultValue="localhost:8080/job/My_First_Pipeline_Job/" />
        <OmniActions>
          <IconButton aria-label="Zoom"><ZoomOutIcon /></IconButton>
          <IconButton aria-label="Bookmark this page" $color="#6b655c"><MdStarBorder size={25} /></IconButton>
        </OmniActions>
      </Omnibox>
      <IconButton aria-label="Extensions"><MdExtension size={24} /></IconButton>
      <Profile>
        <Avatar>S</Avatar>
        Paused
      </Profile>
      <IconButton aria-label="Menu"><MdMoreVert size={28} /></IconButton>
    </Toolbar>
    <Bookmarks aria-label="Bookmarks">
      {bookmarks.map((b) => (
        <Bookmark key={b.label} href="#">
          {b.icon}
          {b.label}
        </Bookmark>
      ))}
      <ReadingList>
        <ReadingListIcon />
        Reading list
      </ReadingList>
    </Bookmarks>
  </>
);

const JenkinsHeader = () => (
  <>
    <Header>
      <Brand href="#">
        <ButlerLogo />
        Jenkins
      </Brand>
      <SearchBox>
        <MdSearch size={18} />
        <SearchInput aria-label="Search" placeholder="Search" />
        <MdHelpOutline size={18} color="#4d545d" />
      </SearchBox>
      <HeaderLink href="#" $gap={15} aria-label="Warnings">
        <MdGppMaybe size={18} />
        <Badge>1</Badge>
      </HeaderLink>
      <HeaderLink href="#" $gap={16}>
        <MdPerson size={16} />
        Shubhankar Dhyani
      </HeaderLink>
      <HeaderLink href="#" $gap={20}>
        <LogoutIcon />
        log out
      </HeaderLink>
    </Header>
    <Crumbs aria-label="Breadcrumb">
      <a href="#">Dashboard</a>
      <Caret />
      <a href="#">My_First_Pipeline_Job</a>
      <Caret />
    </Crumbs>
  </>
);

const Sidebar = () => (
  <SidePanel>
    <Tasks aria-label="Tasks">
      {tasks.map((t) => (
        <Task key={t.label} href="#" $state={t.state}>
          {t.icon}
          {t.label}
        </Task>
      ))}
    </Tasks>
    <HistoryHead>
      <SunIcon />
      <HistoryTitle>Build History</HistoryTitle>
      <Underlined href="#">trend</Underlined>
      <IconButton aria-label="Collapse" $w={30}><MdExpandLess size={18} /></IconButton>
    </HistoryHead>
    <FindBox>
      <FindInput aria-label="Find builds" placeholder="find" />
      x
    </FindBox>
    <Build>
      <MdOutlineCheckCircle size={14} color="#1c8540" />
      <BuildNumber href="#">#1</BuildNumber>
      <Underlined href="#" $color="#888">Sep 13, 2021, 7:56 PM</Underlined>
    </Build>
    <Feeds>
      <Feed href="#"><MdRssFeed size={17} />Atom feed for all</Feed>
      <Feed href="#"><MdRssFeed size={17} />Atom feed for failures</Feed>
    </Feeds>
  </SidePanel>
);

const Stages = () => (
  <StageView>
    <RunColumn>
      <Averages>
        Average stage times:
        <br />
        (Average <u>full</u> run time: ~7s)
      </Averages>
      <Run>
        <RunBadge>#1</RunBadge>
        <RunDate>
          <span>Sep 13</span>
          <span>15:56</span>
        </RunDate>
        <RunChanges>No Changes</RunChanges>
      </Run>
    </RunColumn>
    <StageTable>
      <thead>
        <tr>
          {stages.map((s, i) => (
            <StageName key={s.name} scope="col" $odd={i % 2 === 0}>
              <StageLabel>{s.name}</StageLabel>
            </StageName>
          ))}
        </tr>
      </thead>
      <tbody>
        <tr>
          {stages.map((s, i) => (
            <AverageCell key={s.name} $odd={i % 2 === 0}>
              {s.time}
              <Track>
                <TrackFill style={{ marginLeft: `${s.start}%`, width: `${s.share}%` }} />
              </Track>
            </AverageCell>
          ))}
        </tr>
        <tr>
          {stages.map((s, i) => (
            <RunCell key={s.name} $odd={i % 2 === 0}>
              <RunStage>{s.time}</RunStage>
            </RunCell>
          ))}
        </tr>
      </tbody>
    </StageTable>
  </StageView>
);

const WindowsTaskbar = () => (
  <Taskbar>
    <StartButton aria-label="Start"><WindowsLogo /></StartButton>
    <TaskSearch>
      <TaskSearchIcon />
      <TaskSearchInput aria-label="Search Windows" placeholder="Type here to search" />
    </TaskSearch>
    <Apps $gap={0}>
      {systemApps.map((a) => (
        <AppButton key={a.label} aria-label={a.label} $w={72}>
          {a.icon}
        </AppButton>
      ))}
    </Apps>
    <Apps $gap={2}>
      {apps.map((a) => (
        <AppButton key={a.label} aria-label={a.label} $w={73} $open={a.open} $active={a.active}>
          {a.icon}
        </AppButton>
      ))}
    </Apps>
    <Tray>
      <Weather>
        <WeatherSun />
        88°F
      </Weather>
      <TrayIcons>
        <TrayChevron />
        <BatteryIcon />
        <WifiIcon />
        <PenIcon />
      </TrayIcons>
      <Clock>
        3:56 PM
        <br />
        9/13/2021
      </Clock>
      <Notifications aria-label="Notifications"><NotificationIcon /></Notifications>
      <ShowDesktop aria-label="Show desktop" />
    </Tray>
  </Taskbar>
);

export default function App() {
  return (
    <Screen>
      <GlobalStyle />
      <Browser />
      <JenkinsHeader />
      <PageBody>
        <Sidebar />
        <Main>
          <div>
            <Title>Pipeline My_First_Pipeline_Job</Title>
            <Description>This is my first pipeline job.</Description>
            <RecentChanges href="#">
              <NotepadIcon size={36} />
              Recent Changes
            </RecentChanges>
            <Heading>Stage View</Heading>
            <Stages />
            <Heading>Permalinks</Heading>
          </div>
          <SideActions>
            <EditLink href="#">
              <MdEdit size={15} />
              Edit description
            </EditLink>
            <PrimaryButton>Disable Project</PrimaryButton>
          </SideActions>
        </Main>
      </PageBody>
      <Footer>
        <a href="#">REST API</a>
        <a href="#">Jenkins 2.311</a>
      </Footer>
      <WindowsTaskbar />
    </Screen>
  );
}
